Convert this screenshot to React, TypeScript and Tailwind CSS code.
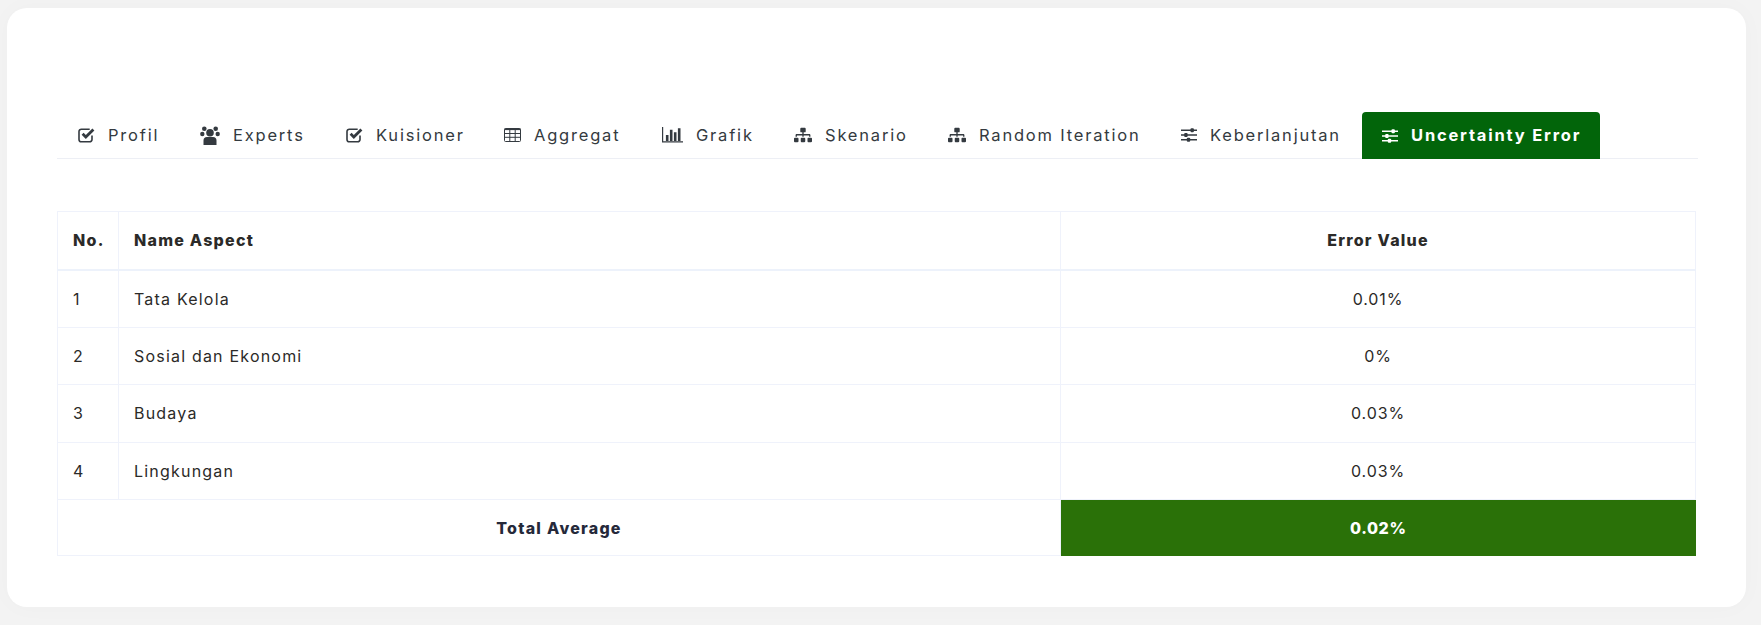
import React from "react";
import { FaSitemap } from "react-icons/fa";

const Check = () => (
  <svg viewBox="0 0 17 16" className="w-[17px] h-4" fill="none">
    <path d="M14 8.5v4a2.3 2.3 0 0 1-2.3 2.3H3.3A2.3 2.3 0 0 1 1 12.5V4.5a2.3 2.3 0 0 1 2.3-2.3h8.4" stroke="currentColor" strokeWidth="1.6" />
    <path d="M4.6 6.8l3.2 3.2 7.6-7.6" stroke="currentColor" strokeWidth="2.8" />
  </svg>
);
const Users = () => (
  <svg viewBox="0 0 20 19" className="w-5 h-[19px]" fill="currentColor">
    <circle cx="4.3" cy="2.7" r="2.3" />
    <circle cx="15.7" cy="2.7" r="2.3" />
    <circle cx="2.3" cy="8" r="2.2" />
    <circle cx="17.7" cy="8" r="2.2" />
    <circle cx="10" cy="6.7" r="3.8" />
    <path d="M3.5 14.5a3.5 3.5 0 0 1 3.5-3.5h6a3.5 3.5 0 0 1 3.5 3.5V19h-13z" />
  </svg>
);
const Grid = () => (
  <svg viewBox="0 0 17 14" className="w-[17px] h-[14px]" fill="none" stroke="currentColor" strokeWidth="1">
    <rect x="0.5" y="0.5" width="16" height="13" rx="1" />
    <path d="M0.5 1.3h16" strokeWidth="1.6" />
    <path d="M0.5 5.5h16M0.5 9.3h16M5.8 1v13M11.2 1v13" />
  </svg>
);
const Chart = () => (
  <svg viewBox="0 0 21 15.5" className="w-[21px] h-[15.5px]" fill="none">
    <path d="M.6 0v14.8H21" stroke="currentColor" strokeWidth="1.2" />
    <path d="M3.9 8h2.6v6H3.9zM7.9 2.7h2.6V14H7.9zM11.9 5.3h2.6V14h-2.6zM15.9 1.3h2.6V14h-2.6z" fill="currentColor" />
  </svg>
);
const Sliders = () => (
  <svg viewBox="0 0 16 14" className="w-4 h-[14px]" fill="currentColor">
    <path d="M0 1.6h16v1.4H0zM0 6.3h16v1.4H0zM0 11h16v1.4H0z" />
    <rect x="9.5" y="0.3" width="3.4" height="4" rx="1" />
    <rect x="3.2" y="5" width="3.4" height="4" rx="1" />
    <rect x="5.8" y="9.7" width="3.4" height="4" rx="1" />
  </svg>
);

const tabs: [string, React.ReactNode, string][] = [
  ["Profil", <Check />, "w-[122px]"],
  ["Experts", <Users />, "w-[146px]"],
  ["Kuisioner", <Check />, "w-[158px]"],
  ["Aggregat", <Grid />, "w-[158px]"],
  ["Grafik", <Chart />, "w-[132px]"],
  ["Skenario", <FaSitemap className="w-[18px] h-4" />, "w-[154px]"],
  ["Random Iteration", <FaSitemap className="w-[18px] h-4" />, "w-[233px]"],
  ["Keberlanjutan", <Sliders />, "w-[201px]"],
];

const rows = [
  ["1", "Tata Kelola", "0.01%"],
  ["2", "Sosial dan Ekonomi", "0%"],
  ["3", "Budaya", "0.03%"],
  ["4", "Lingkungan", "0.03%"],
];

export default function App() {
  return (
    <div className="min-h-[625px] bg-[#f3f3f3] pt-2 pl-[7px] pr-[15px] font-['Inter','Liberation_Sans',sans-serif] overflow-hidden">
      <div className="h-[599px] rounded-[20px] bg-white pt-[104px] px-[50px] shadow-[0_0_24px_rgba(0,0,0,0.025)]">
        <div className="flex h-[47px] -mr-[2px] pl-px border-b border-[#edeff5] text-[#343a40] text-[16.5px] tracking-[1.8px] whitespace-nowrap">
          {tabs.map(([label, icon, w]) => (
            <div key={label} className={`flex items-center pl-5 gap-[13px] h-[46px] ${w}`}>
              {icon}
              <span>{label}</span>
            </div>
          ))}
          <div className="flex items-center pl-5 gap-[13px] h-[47px] w-[238px] rounded-t bg-[#02650a] text-white font-bold">
            <Sliders />
            <span>Uncertainty Error</span>
          </div>
        </div>
        <table className="mt-[52px] w-[1639px] table-fixed border-collapse text-[16px] text-[#2b2a28]">
          <colgroup>
            <col className="w-[61px]" />
            <col className="w-[942px]" />
            <col />
          </colgroup>
          <thead>
            <tr className="h-[58px] border-b-2 border-[#edf2fb] tracking-[1.25px]">
              <th className="border border-[#eff2fb] pl-[15px] text-left font-extrabold">No.</th>
              <th className="border border-[#eff2fb] pl-[15px] text-left font-extrabold">Name Aspect</th>
              <th className="border border-[#eff2fb] px-4 text-center font-extrabold">Error Value</th>
            </tr>
          </thead>
          <tbody>
            {rows.map(([n, name, v]) => (
              <tr key={n} className="h-[57.5px]">
                <td className="border border-[#eff2fb] pl-[15px]">{n}</td>
                <td className="border border-[#eff2fb] pl-[15px] tracking-[1.2px]">{name}</td>
                <td className="border border-[#eff2fb] px-4 text-center tracking-[0.9px]">{v}</td>
              </tr>
            ))}
            <tr className="h-[56px]">
              <td colSpan={2} className="border border-[#eff2fb] text-center font-extrabold text-[#25293a] tracking-[1.25px]">Total Average</td>
              <td className="bg-[#2a7108] text-center font-extrabold text-white tracking-[0.6px]">0.02%</td>
            </tr>
          </tbody>
        </table>
      </div>
    </div>
  );
}
